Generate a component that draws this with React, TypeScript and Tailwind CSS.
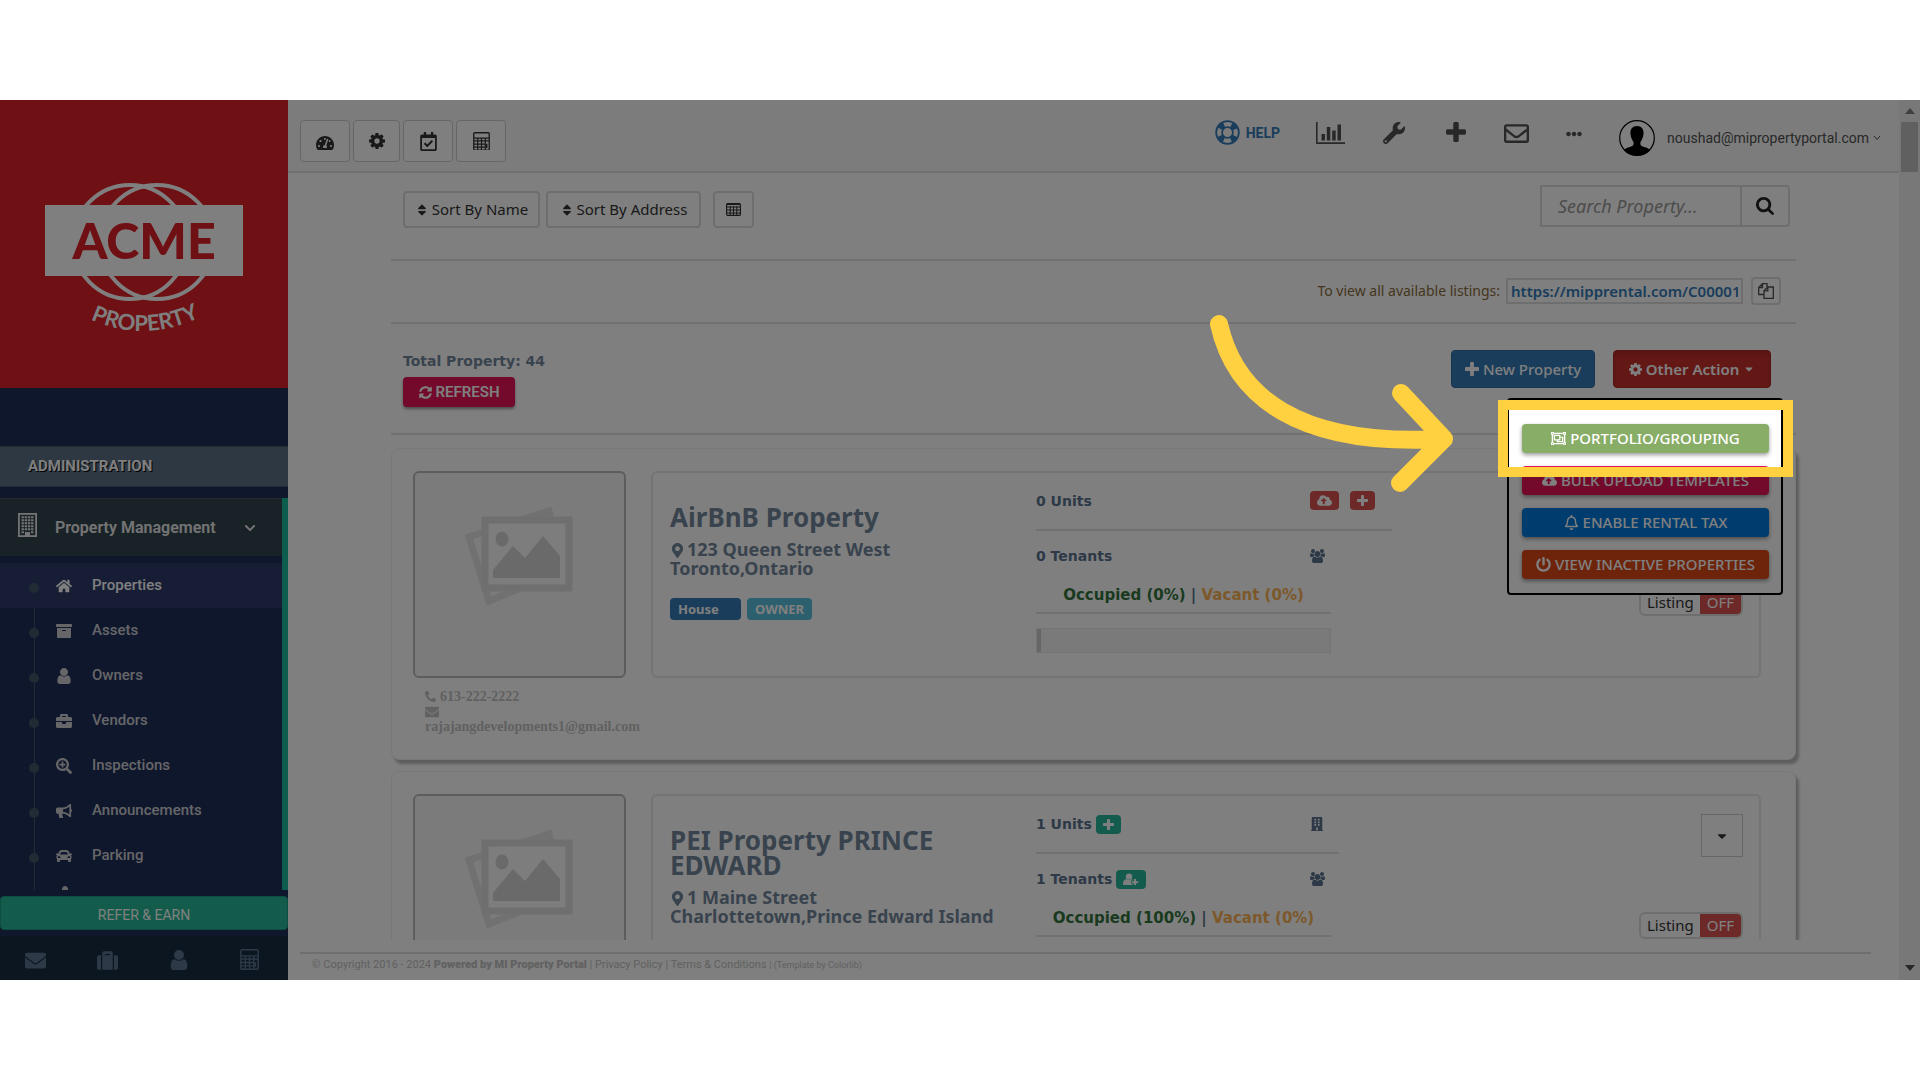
import React from 'react';
import {
  FaTachometerAlt,
  FaRegCalendarCheck,
  FaWrench,
  FaRegEnvelope,
  FaEllipsisH,
  FaChevronDown,
  FaHome,
  FaArchive,
  FaBriefcase,
  FaSearchPlus,
  FaBullhorn,
  FaCar,
  FaEnvelope,
  FaSuitcase,
  FaSort,
  FaSyncAlt,
  FaCaretDown,
  FaRegObjectGroup,
  FaCloudUploadAlt,
  FaRegBell,
  FaPowerOff,
  FaMapMarkerAlt,
  FaPhoneAlt,
  FaBuilding,
} from 'react-icons/fa';

interface IconProps {
  className?: string;
}

const CogIcon: React.FC<IconProps> = ({ className }) => (
  <svg viewBox="128 128 1536 1536" className={className} fill="currentColor" aria-hidden="true">
    <path d="M1152 896q0-106-75-181t-181-75-181 75-75 181 75 181 181 75 181-75 75-181zm512-109v222q0 12-8 23t-20 13l-185 28q-19 54-39 91 35 50 107 138 10 12 10 25t-9 23q-27 37-99 108t-94 71q-12 0-26-9l-138-108q-44 23-91 38-16 136-29 186-7 28-36 28h-222q-14 0-24.500-8.500t-11.500-21.500l-28-184q-49-16-90-37l-141 107q-10 9-25 9-14 0-25-11-126-114-165-168-7-10-7-23 0-12 8-23 15-21 51-66.500t54-70.500q-27-50-41-99l-183-27q-13-2-21-12.500t-8-23.500v-222q0-12 8-23t19-13l186-28q14-46 39-92-40-57-107-138-10-12-10-24 0-10 9-23 26-36 98.500-107.500t94.500-71.500q13 0 26 10l138 107q44-23 91-38 16-136 29-186 7-28 36-28h222q14 0 24.500 8.500t11.500 21.500l28 184q49 16 90 37l142-107q9-9 24-9 13 0 25 10 129 119 165 170 7 8 7 22 0 12-8 23-15 21-51 66.500t-54 70.500q26 50 41 98l183 28q13 2 21 12.500t8 23.500z" />
  </svg>
);

const PlusIcon: React.FC<IconProps> = ({ className }) => (
  <svg viewBox="192 128 1408 1408" className={className} fill="currentColor" aria-hidden="true">
    <path d="M1600 736v192q0 40-28 68t-68 28h-416v416q0 40-28 68t-68 28h-192q-40 0-68-28t-28-68v-416h-416q-40 0-68-28t-28-68v-192q0-40 28-68t68-28h416v-416q0-40 28-68t68-28h192q40 0 68 28t28 68v416h416q40 0 68 28t28 68z" />
  </svg>
);

const UserIcon: React.FC<IconProps> = ({ className }) => (
  <svg viewBox="128 128 1536 1536" className={className} fill="currentColor" aria-hidden="true">
    <path d="M1536 1399q0 109-62.500 187t-150.500 78h-854q-88 0-150.500-78t-62.500-187q0-85 8.500-160.500t31.500-152 58.500-131 94-89 134.500-34.500q131 128 313 128t313-128q76 0 134.500 34.500t94 89 58.500 131 31.500 152 8.500 160.500zm-256-887q0 159-112.500 271.500t-271.500 112.500-271.500-112.500-112.500-271.500 112.500-271.500 271.500-112.500 271.500 112.500 112.500 271.500z" />
  </svg>
);

// user with a plus sign at the lower right
const UserPlusIcon: React.FC<IconProps> = ({ className }) => (
  <svg viewBox="0 0 20 16" className={className} fill="currentColor" aria-hidden="true">
    <circle cx="7.500" cy="4.500" r="4" />
    <path d="M4 7.500C1 8 0 11 0 13.200 0 15 1 16 2.500 16h9.500v-2.500h-2V9.500h2V8a4 4 0 0 0-1-.5c-2 1.800-5 1.800-7 0z" />
    <path d="M13.700 7.500h2.600v2.700H19v2.600h-2.700v2.700h-2.600v-2.700H11v-2.600h2.700z" />
  </svg>
);

const UsersIcon: React.FC<IconProps> = ({ className }) => (
  <svg viewBox="0 0 1920 1792" className={className} fill="currentColor" aria-hidden="true">
    <path d="M593 896q-162 5-265 128h-134q-82 0-138-40.500t-56-118.500q0-353 124-353 6 0 43.500 21t97.500 42.500 119 21.500q67 0 133-23-5 37-5 66 0 139 81 256zm1071 637q0 120-73 189.500t-194 69.500h-874q-121 0-194-69.500t-73-189.500q0-53 3.500-103.500t14-109 26.500-108.500 43-97.500 62-81 85.500-53.500 111.500-20q10 0 43 21.500t73 48 107 48 135 21.500 135-21.500 107-48 73-48 43-21.500q61 0 111.500 20t85.500 53.500 62 81 43 97.500 26.500 108.500 14 109 3.500 103.500zm-1024-1277q0 106-75 181t-181 75-181-75-75-181 75-181 181-75 181 75 75 181zm704 384q0 159-112.500 271.500t-271.500 112.500-271.500-112.500-112.500-271.500 112.500-271.500 271.500-112.500 271.500 112.500 112.500 271.500zm576 225q0 78-56 118.500t-138 40.500h-134q-103-123-265-128 81-117 81-256 0-29-5-66 66 23 133 23 59 0 119-21.500t97.500-42.500 43.500-21q124 0 124 353zm-128-609q0 106-75 181t-181 75-181-75-75-181 75-181 181-75 181 75 75 181z" />
  </svg>
);

const SearchIcon: React.FC<IconProps> = ({ className }) => (
  <svg viewBox="64 128 1664 1664" className={className} fill="currentColor" aria-hidden="true">
    <path d="M1216 832q0-185-131.500-316.500t-316.500-131.500-316.500 131.500-131.500 316.500 131.500 316.500 316.500 131.500 316.500-131.500 131.500-316.500zm512 832q0 52-38 90t-90 38q-54 0-90-38l-343-342q-179 124-399 124-143 0-273.500-55.500t-225-150-150-225-55.500-273.500 55.500-273.500 150-225 225-150 273.500-55.500 273.500 55.500 225 150 150 225 55.500 273.500q0 220-124 399l343 343q37 37 37 90z" />
  </svg>
);

const TableIcon: React.FC<IconProps> = ({ className }) => (
  <svg viewBox="0 0 15 13" className={className} fill="none" stroke="currentColor" aria-hidden="true">
    <rect x="0.6" y="0.6" width="13.8" height="11.8" rx="1" strokeWidth="1.2" />
    <path d="M1 1.500h13M1 4h13M1 7h13M1 10h13M4.200 3v9M7.500 3v9M10.800 3v9" strokeWidth="1.100" />
  </svg>
);

const CopyIcon: React.FC<IconProps> = ({ className }) => (
  <svg viewBox="0 0 16 16" className={className} fill="none" stroke="currentColor" strokeWidth="1.300" aria-hidden="true">
    <path d="M6 11.500H.7V4.500L4.500.7H9V4M4.500.7v3.800H.7" />
    <path d="M15.300 15.300H6V7.800L9.800 4h5.500zM9.800 4v3.800H6" />
  </svg>
);

const CalculatorIcon: React.FC<IconProps> = ({ className }) => (
  <svg viewBox="0 0 18 20" className={className} fill="none" stroke="currentColor" aria-hidden="true">
    <rect x="0.8" y="0.8" width="16.4" height="18.4" rx="1" strokeWidth="1.4" />
    <path d="M1 6.500h16M1 9.500h16M1 12.800h12M1 16h12M5 6.500v13M9 6.500v13M13 6.500v13" strokeWidth="1.3" />
    <path d="M14.500 12.500v4.500" strokeWidth="1.6" />
  </svg>
);

const LifeRingIcon: React.FC<IconProps> = ({ className }) => (
  <svg viewBox="0 0 26 26" className={className} fill="none" stroke="currentColor" aria-hidden="true">
    <circle cx="13" cy="13" r="11.8" strokeWidth="1.8" />
    <circle cx="13" cy="13" r="5.6" strokeWidth="1.8" />
    <circle
      cx="13"
      cy="13"
      r="9"
      strokeWidth="6.5"
      strokeDasharray="6.2 7.937"
      strokeDashoffset="-3.97"
    />
  </svg>
);

const ChartIcon: React.FC<IconProps> = ({ className }) => (
  <svg viewBox="0 0 29 22" className={className} fill="currentColor" aria-hidden="true">
    <path d="M0 0h1.600v20.200H29V22H0zM5.500 12h3.500v6.500H5.500zM10.800 5h3.500v13.500h-3.500zM16.200 8.500h3.500v10h-3.500zM21.500 2.500H25v16h-3.500z" />
  </svg>
);

const BuildingOutlineIcon: React.FC<IconProps> = ({ className }) => (
  <svg viewBox="0 0 19 24" className={className} fill="none" stroke="currentColor" aria-hidden="true">
    <rect x="0.9" y="0.9" width="17.2" height="22.2" strokeWidth="1.8" />
    <path
      d="M3.500 4.300h12M3.500 7.300h12M3.500 10.300h12M3.500 13.300h12M3.500 16.300h12M3.500 19.300h2.500M13 19.300h2.500"
      strokeWidth="2"
      strokeDasharray="2.400 0.800"
    />
    <path d="M7 23v-4h5v4z" fill="currentColor" stroke="none" />
  </svg>
);

const CompanyLogo: React.FC = () => (
  <svg viewBox="0 0 288 288" className="block w-full" role="img" aria-label="ACME Property">
    <g fill="none" stroke="#fff" strokeWidth="4">
      <circle cx="130" cy="142" r="57" />
      <circle cx="157" cy="142" r="57" />
    </g>
    <rect x="45" y="105" width="198" height="71" fill="#fff" />
    <text
      x="144"
      y="159"
      fontSize="50"
      fontWeight="900"
      fontFamily="Lato, sans-serif"
      textAnchor="middle"
      fill="#de2028"
    >
      ACME
    </text>
    <path id="logo-arc" d="M80 214Q144 249 210 212" fill="none" />
    <text fontSize="22" fontWeight="700" fontFamily="Lato, sans-serif" fill="#fff">
      <textPath href="#logo-arc" startOffset="50%" textAnchor="middle">
        PROPERTY
      </textPath>
    </text>
  </svg>
);

const PlaceholderPicture: React.FC = () => (
  <svg viewBox="-2 0 110 104" className="w-[110px]" aria-hidden="true">
    <path d="M2 31L82 5l14 60L22 95z" fill="none" stroke="#e2e2e2" strokeWidth="7" />
    <rect x="18" y="14" width="84" height="68" fill="#fafafa" stroke="#dfdfdf" strokeWidth="7" />
    <ellipse cx="35" cy="33" rx="6.500" ry="7.500" fill="#d4d4d4" />
    <path d="M26 72v-8l20-24 12 12 18-22 17 20v22z" fill="#d4d4d4" />
  </svg>
);

const navItems = [
  { label: 'Properties', icon: FaHome, active: true },
  { label: 'Assets', icon: FaArchive, active: false },
  { label: 'Owners', icon: UserIcon, active: false },
  { label: 'Vendors', icon: FaBriefcase, active: false },
  { label: 'Inspections', icon: FaSearchPlus, active: false },
  { label: 'Announcements', icon: FaBullhorn, active: false },
  { label: 'Parking', icon: FaCar, active: false },
];

const Sidebar: React.FC = () => (
  <aside className="flex w-72 shrink-0 flex-col bg-[#1e2e5a] font-['Roboto',sans-serif]">
    <div className="bg-[#de2028]">
      <CompanyLogo />
    </div>
    <h2 className="mt-[58px] flex h-[41px] items-center border-y border-[#46586a] bg-[#5a7084] pl-7 text-[15px] font-bold text-white [text-shadow:1px_1px_#000]">
      ADMINISTRATION
    </h2>
    <nav className="mt-[11px] flex min-h-0 flex-1 flex-col overflow-hidden border-r-[6px] border-[#1abb9c]">
      <button className="flex h-[58px] shrink-0 items-center border-t border-[#46505c] bg-[#32444f] pl-[18px] text-base font-semibold text-[#e8e8e8]">
        <BuildingOutlineIcon className="mb-1.5 w-[19px]" />
        <span className="ml-[18px]">Property Management</span>
        <FaChevronDown className="ml-7 size-3" />
      </button>
      <ul className="relative mt-[7px] before:absolute before:inset-y-0 before:left-[34px] before:w-px before:bg-[#425668]">
        {navItems.map(({ label, icon: Icon, active }) => (
          <li key={label}>
            <a
              href="#"
              className={`relative flex h-[45px] items-center pl-[29px] text-[15px] font-medium ${
                active ? 'bg-[#2c3b6b] text-white' : 'text-[#cdcdd0]'
              }`}
            >
              <span className="mt-1 size-2.5 rounded-full bg-[#425668]" />
              <Icon className="ml-[17px] size-4" />
              <span className="ml-5">{label}</span>
            </a>
          </li>
        ))}
        <li className="h-[45px] pl-[59px] pt-2 text-[#cdcdd0]">
          <UserIcon className="size-3" />
        </li>
      </ul>
    </nav>
    <button className="mt-[6px] h-[34px] shrink-0 rounded border border-[#1a9c80] bg-[#26b996] pt-1 text-sm text-white">
      REFER &amp; EARN
    </button>
    <div className="mt-1.5 flex h-11 shrink-0 items-center justify-around bg-[#182c40] pr-1 pt-1 text-[#5a738e]">
      <a href="#" aria-label="Messages"><FaEnvelope className="size-[21px]" /></a>
      <a href="#" aria-label="Portfolio"><FaSuitcase className="size-[21px]" /></a>
      <a href="#" aria-label="Profile"><UserIcon className="size-5" /></a>
      <a href="#" aria-label="Calculator"><CalculatorIcon className="w-[19px]" /></a>
    </div>
  </aside>
);

const toolButton =
  'flex h-[42px] items-center justify-center rounded border border-[#ccc] bg-white text-[#333]';

const Header: React.FC = () => (
  <header className="flex h-[73px] items-start justify-between border-b-2 border-[#e0e0e0] bg-[#f8f8f8] pl-3 pr-[18px] font-['Roboto',sans-serif] text-[#515151]">
    <div className="mt-5 flex gap-[3px]">
      <button aria-label="Dashboard" className={`${toolButton} w-[50px]`}>
        <FaTachometerAlt className="mt-1 size-[18px]" />
      </button>
      <button aria-label="Settings" className={`${toolButton} w-[47px]`}>
        <CogIcon className="size-4" />
      </button>
      <button aria-label="Calendar" className={`${toolButton} w-[50px]`}>
        <FaRegCalendarCheck className="size-[19px]" />
      </button>
      <button aria-label="Calculator" className={`${toolButton} w-[50px]`}>
        <CalculatorIcon className="w-[17px]" />
      </button>
    </div>
    <div className="mt-5 flex items-start">
      <a href="#" className="flex items-center gap-[6px] text-sm font-bold text-[#337ab7]">
        <LifeRingIcon className="size-[25px]" />
        HELP
      </a>
      <a href="#" aria-label="Reports" className="ml-9 mt-0.5"><ChartIcon className="w-[29px]" /></a>
      <a href="#" aria-label="Maintenance" className="ml-[38px] mt-0.5"><FaWrench className="size-[22px]" /></a>
      <a href="#" aria-label="Add" className="ml-[41px] mt-0.5"><PlusIcon className="size-5" /></a>
      <a href="#" aria-label="Mail" className="ml-[38px] mt-px"><FaRegEnvelope className="size-[25px]" /></a>
      <a href="#" aria-label="More" className="ml-[37px] mt-1.5"><FaEllipsisH className="size-4" /></a>
      <a href="#" className="ml-[37px] flex items-center text-sm">
        <svg viewBox="0 0 36 36" className="size-9" aria-hidden="true">
          <circle cx="18" cy="18" r="17.300" fill="#fff" stroke="#000" strokeWidth="1.200" />
          <path
            d="M18 6c4.500 0 7 3 6.500 8-.4 4-1.800 6-3 8-.5 3 .5 4 3.500 5 3 .8 5 1.500 6 3.500A17 17 0 0 1 18 35.500 17 17 0 0 1 5 30.500c1-2 3-2.700 6-3.500 3-1 4-2 3.500-5-1.200-2-2.600-4-3-8C11 9 13.500 6 18 6z"
            fill="#000"
          />
        </svg>
        <span className="ml-3">noushad@mipropertyportal.com</span>
        <svg viewBox="0 0 8 6" className="ml-1 w-2" fill="none" stroke="currentColor" aria-hidden="true">
          <path d="M1 1l3 3.500L7 1" />
        </svg>
      </a>
    </div>
  </header>
);

interface Property {
  name: string;
  street: string;
  city: string;
  tags: string[];
  units: number;
  tenants: number;
  occupied: number;
  vacant: number;
  phone?: string;
  email?: string;
}

const properties: Property[] = [
  {
    name: 'AirBnB Property',
    street: '123 Queen Street West',
    city: 'Toronto,Ontario',
    tags: ['House', 'OWNER'],
    units: 0,
    tenants: 0,
    occupied: 0,
    vacant: 0,
    phone: '613-222-2222',
    email: 'rajajangdevelopments1@gmail.com',
  },
  {
    name: 'PEI Property PRINCE EDWARD',
    street: '1 Maine Street',
    city: 'Charlottetown,Prince Edward Island',
    tags: [],
    units: 1,
    tenants: 1,
    occupied: 100,
    vacant: 0,
  },
];

const PropertyStats: React.FC<{ property: Property }> = ({ property }) => {
  const isEmpty = property.units === 0;

  return (
    <div className="w-[356px] pt-[18px] font-['DejaVu_Sans',sans-serif] text-sm font-bold text-[#5a738e]">
      <div className={`flex h-10 border-b-2 border-[#e2e2e2] ${isEmpty ? '' : 'w-[303px]'}`}>
        <div className="flex h-5 w-[274px] items-center gap-1">
          <span>{property.units} Units</span>
          {!isEmpty && (
            <button aria-label="Add unit" className="flex h-[19px] w-[25px] items-center justify-center rounded bg-[#26b99a] text-white">
              <PlusIcon className="size-[11px]" />
            </button>
          )}
        </div>
        {isEmpty ? (
          <div className="flex gap-[11px] text-white">
            <button aria-label="Upload units" className="flex h-[19px] w-[29px] items-center justify-center rounded bg-[#d9534f]">
              <FaCloudUploadAlt className="size-[15px]" />
            </button>
            <button aria-label="Add unit" className="flex h-[19px] w-[25px] items-center justify-center rounded bg-[#d9534f]">
              <PlusIcon className="size-[11px]" />
            </button>
          </div>
        ) : (
          <FaBuilding className="mt-[3px] size-3.5" />
        )}
      </div>
      <div className="mt-[15px] flex h-5 items-center">
        <div className="flex w-[274px] items-center gap-1">
          <span>{property.tenants} Tenants</span>
          {!isEmpty && (
            <button aria-label="Add tenant" className="flex h-[19px] w-[30px] items-center justify-center rounded bg-[#26b99a] text-white">
              <UserPlusIcon className="w-4" />
            </button>
          )}
        </div>
        <UsersIcon className="w-[15px]" />
      </div>
      <div className="mt-[18px] w-[295px] border-b-2 border-[#e2e2e2] pb-1.5 text-center text-[15px] leading-[22px]">
        <span className="text-[#33743c]">Occupied ({property.occupied}%)</span> |{' '}
        <span className="text-[#f9b154]">Vacant ({property.vacant}%)</span>
      </div>
      <div className="mt-3.5 h-[25px] w-[295px] border border-[#e8e8e8] bg-[#f5f5f5]">
        <div className="h-full w-1 bg-[#ccc]" />
      </div>
    </div>
  );
};

const PropertyCard: React.FC<{ property: Property }> = ({ property }) => (
  <article className="min-h-[312px] shrink-0 rounded-lg border border-[#f0f0f0] bg-white pl-[21px] pr-[34px] pt-[22px] shadow-[3px_4px_3px_#bbb]">
    <div className="flex items-start gap-[25px]">
      <div className="flex h-[207px] w-[213px] shrink-0 items-start justify-center rounded-md border-2 border-[#bbb] bg-[#f7f7f7] pt-[33px]">
        <PlaceholderPicture />
      </div>
      <div className="flex h-[207px] flex-1 rounded-md border-2 border-[#e8e8e8] pl-[17px] pr-4">
        <div className="w-[366px] shrink-0 pt-8 font-['Noto_Sans',sans-serif] font-bold text-[#73879c]">
          <h3 className="w-[300px] text-[26px] leading-[25px]">{property.name}</h3>
          <address className="mt-2.5 text-[18px] leading-[19px] not-italic">
            <FaMapMarkerAlt className="mr-0.5 inline size-[15px] align-[-2px]" />
            {property.street}
            <br />
            {property.city}
          </address>
          <div className="mt-5 flex gap-1.5 text-[13px] text-white">
            {property.tags.map((tag, i) => (
              <span
                key={tag}
                className={`h-[22px] rounded px-2 leading-[22px] ${i === 0 ? 'w-[71px] bg-[#337ab7]' : 'bg-[#5bc0de]'}`}
              >
                {tag}
              </span>
            ))}
          </div>
        </div>
        <PropertyStats property={property} />
        <div className="ml-auto flex flex-col items-end pt-[18px]">
          <button aria-label="Property actions" className="flex h-[43px] w-[42px] items-center justify-center border border-[#ccc] text-[#333]">
            <FaCaretDown className="size-3.5" />
          </button>
          <button className="mt-[55px] flex h-[27px] items-center overflow-hidden rounded-md border-2 border-[#ddd] font-['Noto_Sans',sans-serif] text-[15px] text-[#333]">
            <span className="px-1.5">Listing</span>
            <span className="bg-[#d9534f] px-[7px] leading-[25px] text-white">OFF</span>
          </button>
        </div>
      </div>
    </div>
    {property.phone && (
      <div className="ml-3 mt-[11px] w-[213px] font-['Liberation_Serif',serif] text-sm font-bold leading-4 text-[#c2c2c2]">
        <p>
          <FaPhoneAlt className="mr-1 inline size-[11px] align-[-1px]" />
          {property.phone}
        </p>
        <p>
          <FaEnvelope className="block size-3.5" />
          {property.email}
        </p>
      </div>
    )}
  </article>
);

const menuItems = [
  { label: 'PORTFOLIO/GROUPING', icon: FaRegObjectGroup, color: 'bg-[#88ad66]' },
  { label: 'BULK UPLOAD TEMPLATES', icon: FaCloudUploadAlt, color: 'bg-[#e61458]' },
  { label: 'ENABLE RENTAL TAX', icon: FaRegBell, color: 'bg-[#007bdc]' },
  { label: 'VIEW INACTIVE PROPERTIES', icon: FaPowerOff, color: 'bg-[#dc4616]' },
];

const ActionMenu: React.FC = () => (
  <div className="absolute right-[-12px] top-12 z-10 flex w-[276px] flex-col gap-[13px] rounded border-2 border-black bg-white pb-[14px] pl-[13px] pr-3 pt-6">
    {menuItems.map(({ label, icon: Icon, color }) => (
      <button
        key={label}
        className={`flex h-[29px] items-center justify-center gap-1 whitespace-nowrap rounded-sm text-[15px] font-medium text-white shadow-[0_2px_4px_#0006] ${color}`}
      >
        <Icon className="size-[15px]" />
        {label}
      </button>
    ))}
  </div>
);

const Main: React.FC = () => {
  const sortButton =
    'flex h-[37px] items-center justify-center gap-[3px] rounded border-2 border-[#ddd] text-[#333]';

  return (
    <main className="flex min-h-0 flex-1 flex-col overflow-hidden px-[103px] font-['Noto_Sans',sans-serif] text-[15px]">
      <div className="flex h-[88px] shrink-0 items-start border-b-2 border-[#e2e2e2] pl-3 pr-1.5 pt-[12px]">
        <div className="mt-1.5 flex">
          <button className={`${sortButton} w-[137px]`}>
            <FaSort className="size-3.5" />
            Sort By Name
          </button>
          <button className={`${sortButton} ml-1.5 w-[155px]`}>
            <FaSort className="size-3.5" />
            Sort By Address
          </button>
          <button aria-label="Table view" className={`${sortButton} ml-3 w-[41px]`}>
            <TableIcon className="w-[15px] shrink-0" />
          </button>
        </div>
        <form className="ml-auto flex h-[42px] text-[18px]">
          <input
            type="text"
            aria-label="Search Property"
            placeholder="Search Property..."
            className="w-[200px] border-2 border-r-0 border-[#ddd] px-4 italic placeholder:text-[#999]"
          />
          <button type="button" aria-label="Search" className="flex w-[50px] items-center justify-center rounded-r border-2 border-[#ddd] text-[#222]">
            <SearchIcon className="size-[18px]" />
          </button>
        </form>
      </div>
      <div className="flex h-[63px] shrink-0 items-center justify-end border-b-2 border-[#e2e2e2] pb-0.5 pr-[15px] text-[14px] text-[#8a6d3b]">
        <label htmlFor="listing-url">To view all available listings:</label>
        <input
          id="listing-url"
          type="text"
          readOnly
          value="https://mipprental.com/C00001"
          className="ml-1.5 h-[26px] w-[237px] border-2 border-[#ddd] px-[3px] text-[15px] font-semibold text-[#337ab7]"
        />
        <button aria-label="Copy link" className="ml-2 flex h-7 w-[30px] items-center justify-center rounded border-2 border-[#ddd] text-[#515151]">
          <CopyIcon className="size-4" />
        </button>
      </div>
      <div className="flex h-[111px] shrink-0 items-start justify-between border-b-2 border-[#e2e2e2] pl-3 pr-[25px] pt-[26px]">
        <div className="pt-px">
          <p className="font-['DejaVu_Sans',sans-serif] text-sm font-bold text-[#73879c]">Total Property: 44</p>
          <button className="mt-1.5 flex h-[30px] w-28 items-center justify-center gap-1 rounded-sm bg-[#e61458] font-['Roboto',sans-serif] font-semibold text-white shadow-[0_2px_3px_#999]">
            <FaSyncAlt className="size-[13px]" />
            REFRESH
          </button>
        </div>
        <div className="flex gap-[18px] font-medium text-white">
          <button className="flex h-[38px] w-36 items-center justify-center gap-1 rounded border border-[#2e6da4] bg-[#337ab7]">
            <PlusIcon className="size-3.5" />
            New Property
          </button>
          <div className="relative">
            <button className="flex h-[38px] w-[158px] items-center justify-center gap-1 rounded border border-[#ac2925] bg-[#c9302c] font-semibold shadow-[inset_0_3px_5px_#0002]">
              <CogIcon className="size-[13px]" />
              Other Action
              <FaCaretDown className="size-3" />
            </button>
            <ActionMenu />
          </div>
        </div>
      </div>
      <div className="mt-[13px] flex flex-col gap-[11px]">
        {properties.map((property) => (
          <PropertyCard key={property.name} property={property} />
        ))}
      </div>
    </main>
  );
};

const Scrollbar: React.FC = () => (
  <div className="flex w-[21px] shrink-0 flex-col items-center bg-[#f0f0f0]" aria-hidden="true">
    <svg viewBox="0 0 10 6" className="my-2 w-2.5 shrink-0" fill="#808080">
      <path d="M5 0l5 6H0z" />
    </svg>
    <div className="h-[50px] w-[17px] bg-[#c1c1c1]" />
    <svg viewBox="0 0 10 6" className="mb-[9px] mt-auto w-2.5 shrink-0" fill="#505050">
      <path d="M5 6l5-6H0z" />
    </svg>
  </div>
);

const App: React.FC = () => {
  return (
    <div className="h-screen bg-white py-[100px]">
      <div className="relative flex h-full overflow-hidden bg-white">
        <Sidebar />
        <div className="flex min-w-0 flex-1 flex-col">
          <Header />
          <Main />
          <footer className="mx-3 mr-7 mt-3 h-7 shrink-0 border-t-2 border-[#ddd] pl-3 pt-0.5 font-['Roboto',sans-serif] text-[11px] leading-[18px] text-[#c2c2c2]">
            © Copyright 2016 - 2024 <a href="#" className="font-black">Powered by MI Property Portal</a> |{' '}
            <a href="#">Privacy Policy</a> | <a href="#">Terms &amp; Conditions</a>{' '}
            <small className="text-[9px]">| (Template by Colorlib)</small>
          </footer>
        </div>
        <Scrollbar />

        {/* Spotlight on the first menu entry, everything else is dimmed */}
        <div className="pointer-events-none absolute right-[137px] top-[310px] z-20 h-[57px] w-[275px] shadow-[0_0_0_9999px_#00000080] outline-[10px] outline-solid outline-[#ffd140]" />
        <svg
          viewBox="0 0 250 190"
          className="pointer-events-none absolute right-[460px] top-[205px] z-30 w-[250px]"
          fill="none"
          stroke="#ffd140"
          strokeWidth="18"
          strokeLinecap="round"
          strokeLinejoin="round"
          aria-hidden="true"
        >
          <path d="M9 19C25 91 88 142 232 134M191 88L234 134L190 178" />
        </svg>
      </div>
    </div>
  );
};

export default App;
